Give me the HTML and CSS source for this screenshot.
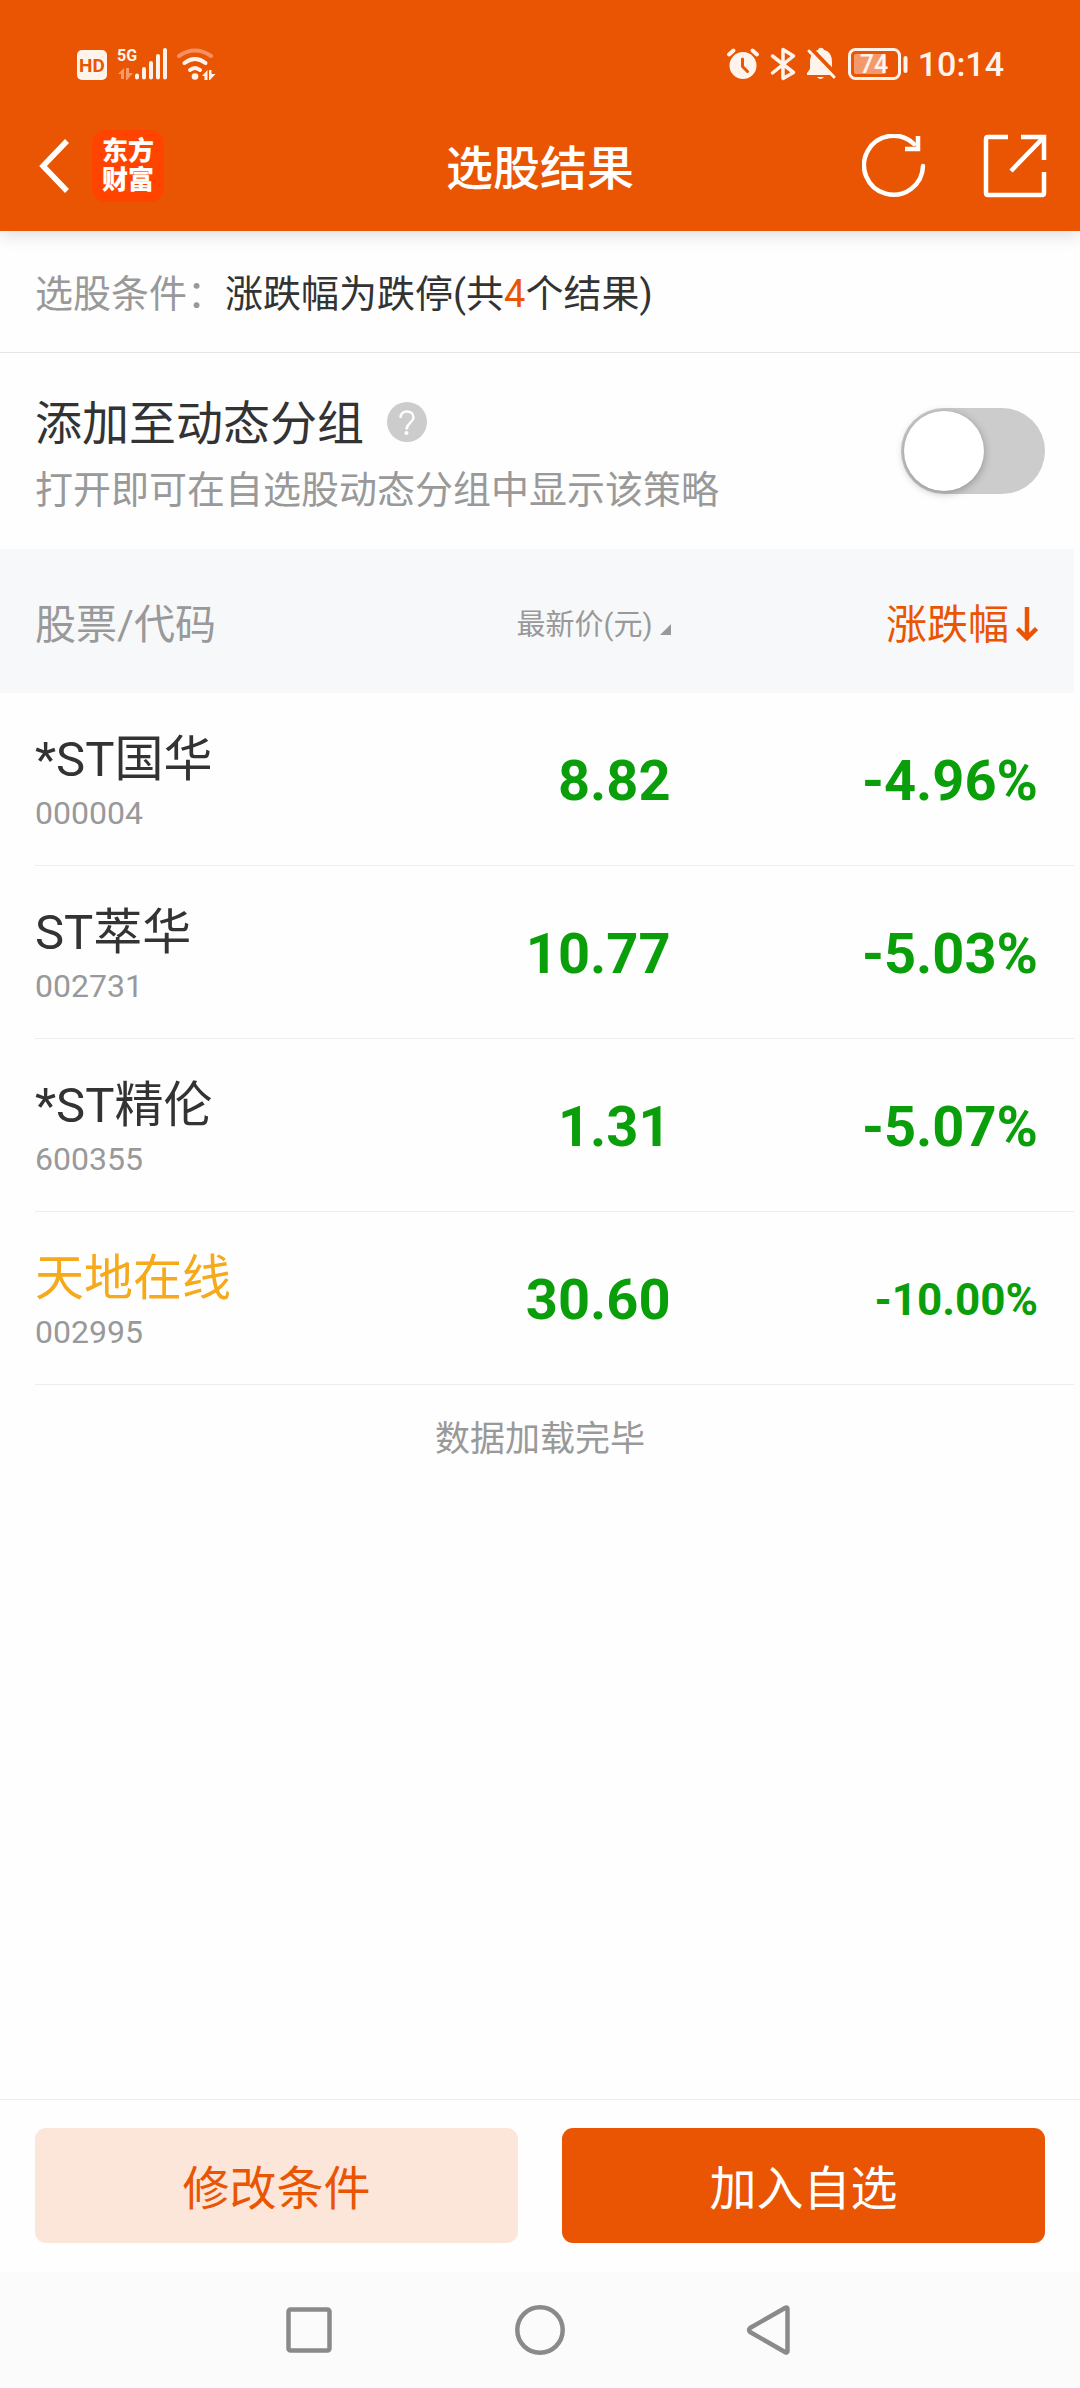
FILE: index.html
```html
<!DOCTYPE html>
<html lang="zh-CN">
<head>
<meta charset="utf-8">
<meta name="viewport" content="width=device-width, initial-scale=1">
<title>选股结果</title>
<link rel="stylesheet" href="styles.css">
</head>
<body>
<header class="top">
  <div class="status">
    <div class="status-group">
      <svg class="status-icon" width="140" height="36" viewBox="76 46 140 36" fill="#fff4ec" role="img" aria-label="HD 5G Wi-Fi">
        <rect x="77" y="50" width="30" height="30" rx="5"/>
        <text class="hd-text" x="92" y="72" text-anchor="middle">HD</text>
        <text class="net-text" x="117" y="61">5G</text>
        <path fill="#f59a68" d="M118 74l6-6v11h-3v-5zM126 68h3v5h4l-6 7h-1z"/>
        <g stroke="#fff4ec" stroke-width="4" stroke-linecap="round">
          <path d="M137 75.500v2M144 69v8.500M151 63v14.500M158 56v21.500M165 50v27.500"/>
        </g>
        <g fill="none" stroke-width="4" stroke-linecap="round">
          <path stroke="#f59060" d="M179 56q16-11 32 0"/>
          <path stroke="#fff4ec" d="M184.500 63q10.500-8 21 0M190 70q5-4 10 0"/>
        </g>
        <circle cx="195" cy="76.500" r="3.300"/>
        <path d="M202 76l5.500-6v10h-3v-4zM209 70h2.500v4h4l-5.500 6h-1z"/>
      </svg>
    </div>
    <div class="status-group">
      <svg class="status-icon" width="184" height="36" viewBox="726 46 184 36" role="img" aria-label="闹钟 蓝牙 静音 电量 74">
        <g stroke="#fff4ec" fill="none" stroke-linecap="round" stroke-linejoin="round">
          <circle cx="744" cy="65.500" r="13.500" fill="#fff4ec" stroke="none"/>
          <path stroke-width="4" d="M730 54.500l4.500-4M758 54.500l-4.500-4"/>
          <path stroke="#ea5504" stroke-width="3" d="M743.500 59v7.500l5 5"/>
          <path stroke-width="3.500" d="M773.500 56l21 16.500-10.500 6V49.500l10.500 6.500-21 17"/>
        </g>
        <path fill="#fff4ec" d="M808 75v-2l3-4v-7c0-7 4-11 8-12 1-3 5-3 6 0 5 1 8 5 8 12v7l3 4v2zM818 77h7q-3.500 4-7 0z"/>
        <path stroke="#ea5504" stroke-width="4" d="M811 47.500l27 28"/>
        <path stroke="#fff4ec" stroke-width="3" stroke-linecap="round" d="M810 51l25 26"/>
        <rect x="850.500" y="49.500" width="50" height="29" rx="6" fill="none" stroke="#fff4ec" stroke-width="3"/>
        <rect x="855" y="54" width="32" height="20" rx="2" fill="#f49a6a"/>
        <rect x="904.500" y="56" width="4" height="17" rx="2" fill="#fff4ec"/>
        <text class="battery-text" x="875" y="73" text-anchor="middle">74</text>
      </svg>
      <time class="clock">10:14</time>
    </div>
  </div>
  <nav class="bar">
    <div class="bar-side">
      <button class="icon-button" type="button" aria-label="返回">
        <svg width="37" height="54" viewBox="-7 0 37 54" fill="none" stroke="#fff" stroke-width="5.500"><path d="M27 2L3 27l24 25"/></svg>
      </button>
      <a class="logo" href="#"><span>东方</span><span>财富</span></a>
    </div>
    <h1 class="title">选股结果</h1>
    <div class="bar-side bar-right">
      <button class="icon-button" type="button" aria-label="刷新">
        <svg width="64" height="64" viewBox="0 1 64 64" fill="none" stroke="#fff" stroke-width="4.500" stroke-linecap="round"><path d="M61 33a29.500 29.500 0 1 1-9-22"/><path d="M56 3v13H43" stroke-linecap="butt"/></svg>
      </button>
      <button class="icon-button" type="button" aria-label="分享">
        <svg width="64" height="64" viewBox="0 0 64 64" fill="none" stroke="#fff" stroke-width="4.500"><path d="M25 3H5q-2 0-2 2v54q0 2 2 2h54q2 0 2-2V38"/><path d="M38 3h23v23M61 3L28 37"/></svg>
      </button>
    </div>
  </nav>
</header>

<main class="content">
  <p class="condition"><span class="muted">选股条件：</span>涨跌幅为跌停(共<em class="count">4</em>个结果)</p>

  <section class="group">
    <div class="group-text">
      <div class="group-head">
        <label class="group-title" for="dynamic">添加至动态分组</label>
        <button class="icon-button" type="button" aria-label="帮助">
          <svg width="40" height="44" viewBox="0 0 40 44"><circle cx="20" cy="20" r="20" fill="#ccc"/><path d="M13.500 16c0-9 13-8.500 13-.500 0 5-7 5.500-7 12" fill="none" stroke="#fff" stroke-width="2.500"/><circle cx="19.500" cy="31" r="2" fill="#fff"/></svg>
        </button>
      </div>
      <p class="group-note">打开即可在自选股动态分组中显示该策略</p>
    </div>
    <input class="switch" id="dynamic" type="checkbox" role="switch">
  </section>

  <table class="stocks">
    <thead>
      <tr>
        <th class="name-col" scope="col">股票/代码</th>
        <th class="price-col" scope="col"><button class="sort sort-price" type="button">最新价(元)<svg width="11" height="11" viewBox="0 0 11 11"><path d="M11 0v11H0z" fill="#999"/></svg></button></th>
        <th class="change-col" scope="col" aria-sort="descending"><button class="sort sort-active" type="button">涨跌幅<svg width="22" height="40" viewBox="0 -6 22 40" fill="none" stroke="#ea5504" stroke-width="4.500"><path d="M11 0v31M1.500 21.500L11 31l9.500-9.500"/></svg></button></th>
      </tr>
    </thead>
    <tbody>
      <tr><td><div class="name">*ST国华</div><div class="code">000004</div></td><td class="figure">8.82</td><td class="figure">-4.96%</td></tr>
      <tr><td><div class="name">ST萃华</div><div class="code">002731</div></td><td class="figure">10.77</td><td class="figure">-5.03%</td></tr>
      <tr><td><div class="name">*ST精伦</div><div class="code">600355</div></td><td class="figure">1.31</td><td class="figure">-5.07%</td></tr>
      <tr><td><div class="name name-marked">天地在线</div><div class="code">002995</div></td><td class="figure">30.60</td><td class="figure figure-long">-10.00%</td></tr>
    </tbody>
  </table>
  <p class="done">数据加载完毕</p>
</main>

<footer class="actions">
  <button class="action action-light" type="button">修改条件</button>
  <button class="action action-main" type="button">加入自选</button>
</footer>

<nav class="system" aria-label="系统导航">
  <button class="icon-button" type="button" aria-label="最近任务"><svg width="52" height="52" viewBox="0 0 52 52" fill="none" stroke="#8a8a8a" stroke-width="4.500"><rect x="5.500" y="5.500" width="41" height="41" rx="2"/></svg></button>
  <button class="icon-button" type="button" aria-label="主屏幕"><svg width="52" height="52" viewBox="0 0 52 52" fill="none" stroke="#8a8a8a" stroke-width="4.500"><circle cx="26" cy="26" r="22.700"/></svg></button>
  <button class="icon-button" type="button" aria-label="返回上一页"><svg width="52" height="52" viewBox="0 0 52 52" fill="none" stroke="#8a8a8a" stroke-width="4.500" stroke-linejoin="round"><path d="M42.500 5v42q0 2.500-2.500 1L5 28q-2-2 0-4L40 4q2.500-1.500 2.500 1z"/></svg></button>
</nav>
</body>
</html>
```
FILE: styles.css
```css
* {
  box-sizing: border-box;
}

body {
  margin: 0;
  min-height: 100vh;
  display: flex;
  flex-direction: column;
  background: #fefefe;
  color: #333;
  font-family: Roboto, "Noto Sans CJK SC", sans-serif;
}

h1,
p {
  margin: 0;
}

button {
  padding: 0;
  border: 0;
  background: none;
  font: inherit;
  color: inherit;
  cursor: pointer;
}

svg {
  display: block;
}

.icon-button {
  display: block;
}

/* Status bar and title bar */
.top {
  background: #ea5504;
  color: #fff;
  box-shadow: 0 2px 18px rgba(0, 0, 0, 0.16);
}

.status {
  display: flex;
  justify-content: space-between;
  height: 102px;
  padding: 26px 76px 0;
}

.status-group {
  display: flex;
  align-items: center;
  gap: 9px;
}

.hd-text {
  font: 700 19px Roboto, sans-serif;
  fill: #ea5504;
}

.net-text {
  font: 700 16px Roboto, sans-serif;
}

.battery-text {
  font: 500 25px Roboto, sans-serif;
  fill: #fff4ec;
}

.clock {
  font-size: 34px;
  font-weight: 500;
  line-height: 40px;
  color: #fff4ec;
}

.bar {
  display: grid;
  grid-template-columns: 1fr auto 1fr;
  align-items: center;
  height: 129px;
  padding: 0 33px 2px;
}

.bar-side {
  display: flex;
  align-items: center;
  gap: 22px;
}

.bar-right {
  justify-content: flex-end;
  gap: 57px;
}

.logo {
  display: grid;
  align-content: center;
  justify-items: center;
  width: 72px;
  height: 72px;
  border-radius: 14px;
  background: #ff4400;
  color: #fff;
  font-size: 26px;
  font-weight: 900;
  line-height: 29px;
  text-decoration: none;
}

.title {
  padding-top: 6px;
  font-size: 47px;
  font-weight: 500;
  line-height: 64px;
}

/* Query summary */
.content {
  flex: 1;
}

.condition {
  padding: 35px 35px 29px;
  border-bottom: 1px solid #e6e6e6;
  font-size: 38px;
  line-height: 57px;
}

.muted {
  color: #999;
}

.count {
  color: #ea5504;
  font-style: normal;
}

/* Dynamic group switch */
.group {
  display: flex;
  align-items: center;
  justify-content: space-between;
  height: 196px;
  padding: 0 35px;
}

.group-text {
  padding-top: 5px;
}

.group-head {
  display: flex;
  align-items: center;
  gap: 23px;
}

.group-title {
  font-size: 47px;
  line-height: 72px;
}

.group-note {
  color: #999;
  font-size: 38px;
  line-height: 60px;
}

.switch {
  appearance: none;
  width: 144px;
  height: 86px;
  margin: 0;
  padding: 3px;
  border-radius: 43px;
  background: #ccc;
}

.switch::before {
  content: "";
  display: block;
  width: 80px;
  height: 80px;
  border-radius: 50%;
  background: #fff;
  box-shadow: 0 2px 8px rgba(0, 0, 0, 0.3);
}

.switch:checked {
  background: #ea5504;
}

.switch:checked::before {
  margin-left: auto;
}

/* Results */
.stocks {
  width: calc(100% - 6px);
  table-layout: fixed;
  border-spacing: 0;
}

.name-col {
  width: 34%;
}

.price-col {
  width: 29%;
}

.change-col {
  width: 37%;
}

th {
  height: 144px;
  padding: 0 0 0 35px;
  background: #f7f8fa;
  color: #999;
  font-size: 41px;
  font-weight: 400;
  text-align: left;
}

th.price-col,
td.figure {
  padding-left: 0;
  padding-right: 6px;
  text-align: right;
}

th.change-col,
td.figure:last-child {
  padding-left: 0;
  padding-right: 36px;
  text-align: right;
}

.sort {
  display: inline-flex;
  align-items: center;
  gap: 7px;
}

.sort-price {
  align-items: baseline;
  font-size: 29px;
}

.sort-active {
  color: #ea5504;
}

td {
  height: 173px;
  padding: 3px 0 0 35px;
  background: linear-gradient(#ededed, #ededed) 0 100% / 100% 1px no-repeat;
}

td:first-child {
  background-position: 35px 100%;
}

.name {
  font-size: 49px;
  line-height: 64px;
}

.name-marked {
  color: #f5a91b;
}

.code {
  color: #999;
  font-size: 32px;
  line-height: 42px;
}

.figure {
  color: #0a9f0a;
  font-size: 56px;
  font-weight: 700;
}

.figure-long {
  font-size: 44px;
}

.done {
  padding: 27px 0;
  color: #999;
  font-size: 35px;
  line-height: 56px;
  text-align: center;
}

/* Bottom actions */
.actions {
  display: flex;
  gap: 44px;
  padding: 28px 35px 29px;
  border-top: 1px solid #ededed;
}

.action {
  flex: 1;
  height: 115px;
  padding-bottom: 3px;
  border-radius: 11px;
  font-size: 47px;
}

.action-light {
  background: #fce6da;
  color: #ea5504;
}

.action-main {
  background: #ea5504;
  color: #fff;
}

.system {
  display: flex;
  justify-content: center;
  gap: 179px;
  padding: 32px 0;
  background: #fbfbfb;
}
```
